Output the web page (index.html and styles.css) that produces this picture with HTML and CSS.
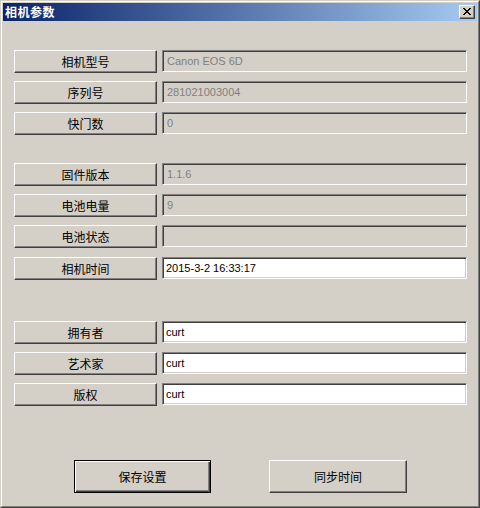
FILE: index.html
```html
<!DOCTYPE html>
<html lang="zh">
<head>
<meta charset="utf-8">
<title>相机参数</title>
<link rel="stylesheet" href="styles.css">
</head>
<body>
<div class="window">
  <div class="frame">
    <div class="titlebar">
      <span class="title">相机参数</span>
      <div class="close">
        <svg width="8" height="7" viewBox="0 0 8 7" shape-rendering="crispEdges">
          <path fill="#000" d="M0 0h2v1h-2zM6 0h2v1h-2zM1 1h2v1h-2zM5 1h2v1h-2zM2 2h4v1h-4zM3 3h2v1h-2zM2 4h4v1h-4zM1 5h2v1h-2zM5 5h2v1h-2zM0 6h2v1h-2zM6 6h2v1h-2z"/>
        </svg>
      </div>
    </div>
    <div class="client">
      <div class="group">
        <div class="row"><div class="label-btn">相机型号</div><div class="field readonly">Canon EOS 6D</div></div>
        <div class="row"><div class="label-btn">序列号</div><div class="field readonly">281021003004</div></div>
        <div class="row"><div class="label-btn">快门数</div><div class="field readonly">0</div></div>
      </div>
      <div class="group group-2">
        <div class="row"><div class="label-btn">固件版本</div><div class="field readonly">1.1.6</div></div>
        <div class="row"><div class="label-btn">电池电量</div><div class="field readonly">9</div></div>
        <div class="row"><div class="label-btn">电池状态</div><div class="field readonly"></div></div>
        <div class="row row-shift"><div class="label-btn">相机时间</div><div class="field">2015-3-2 16:33:17</div></div>
      </div>
      <div class="group group-3">
        <div class="row"><div class="label-btn">拥有者</div><div class="field">curt</div></div>
        <div class="row"><div class="label-btn">艺术家</div><div class="field">curt</div></div>
        <div class="row"><div class="label-btn">版权</div><div class="field">curt</div></div>
      </div>
      <div class="actions">
        <div class="btn btn-default"><span>保存设置</span></div>
        <div class="btn btn-sync"><span>同步时间</span></div>
      </div>
    </div>
  </div>
</div>
</body>
</html>
```

FILE: styles.css
```css
html, body {
  margin: 0;
  padding: 0;
  background: #d4d0c8;
}

.window {
  width: 480px;
  height: 508px;
  box-sizing: border-box;
  border: 1px solid;
  border-color: #d4d0c8 #404040 #404040 #d4d0c8;
  background: #d4d0c8;
}

.frame {
  height: 100%;
  box-sizing: border-box;
  border: 1px solid;
  border-color: #ffffff #808080 #808080 #ffffff;
  padding: 1px;
  display: flex;
  flex-direction: column;
}

.titlebar {
  height: 18px;
  flex: none;
  background: linear-gradient(to right, #0a246a, #a6caf0);
  display: flex;
  align-items: center;
  justify-content: space-between;
  padding: 0 2px 0 2px;
}

.title {
  color: #ffffff;
  font-family: "Noto Sans CJK SC", sans-serif;
  font-weight: bold;
  font-size: 12px;
  letter-spacing: 0.5px;
  line-height: 18px;
}

.close {
  width: 16px;
  height: 14px;
  box-sizing: border-box;
  background: #d4d0c8;
  border: 1px solid;
  border-color: #ffffff #404040 #404040 #ffffff;
  box-shadow: inset -1px -1px 0 #808080;
  display: flex;
  align-items: flex-start;
  justify-content: flex-start;
  padding: 2px 0 0 3px;
}

.close svg {
  display: block;
}

.client {
  flex: 1;
  padding: 29px 0 0 11px;
  display: flex;
  flex-direction: column;
}

.group {
  display: flex;
  flex-direction: column;
  gap: 8px;
}

.group-2 {
  margin-top: 28px;
}

.group-3 {
  margin-top: 41px;
}

.row {
  display: grid;
  grid-template-columns: 143px 305px;
  column-gap: 5px;
  align-items: start;
  height: 23px;
}

.row-shift {
  margin-top: 1px;
}

.label-btn {
  height: 23px;
  box-sizing: border-box;
  border: 1px solid;
  border-color: #ffffff #404040 #404040 #ffffff;
  box-shadow: inset -1px -1px 0 #808080;
  display: flex;
  align-items: center;
  justify-content: center;
  font-family: "Noto Sans CJK SC", sans-serif;
  font-size: 12px;
  color: #000000;
  padding-bottom: 1px;
}

.field {
  height: 22px;
  box-sizing: border-box;
  border: 1px solid;
  border-color: #808080 #ffffff #ffffff #808080;
  box-shadow: inset 1px 1px 0 #404040, inset -1px -1px 0 #d4d0c8;
  background: #ffffff;
  color: #000000;
  font-family: "Liberation Sans", "Noto Sans CJK SC", sans-serif;
  font-size: 11px;
  display: flex;
  align-items: center;
  padding: 0 0 1px 3px;
  white-space: nowrap;
}

.field.readonly {
  background: #d4d0c8;
  color: #808080;
  padding-left: 4px;
}

.actions {
  margin-top: 54px;
  margin-left: 60px;
  display: flex;
  align-items: flex-start;
  gap: 58px;
}

.btn {
  height: 33px;
  box-sizing: border-box;
  display: flex;
  align-items: center;
  justify-content: center;
  font-family: "Noto Sans CJK SC", sans-serif;
  font-size: 12px;
  color: #000000;
}

.btn-default {
  width: 137px;
  border: 1px solid #000000;
  box-shadow: inset 1px 1px 0 #ffffff, inset -1px -1px 0 #404040, inset -2px -2px 0 #808080;
}

.btn-sync {
  width: 138px;
  border: 1px solid;
  border-color: #ffffff #404040 #404040 #ffffff;
  box-shadow: inset -1px -1px 0 #808080;
}
```
